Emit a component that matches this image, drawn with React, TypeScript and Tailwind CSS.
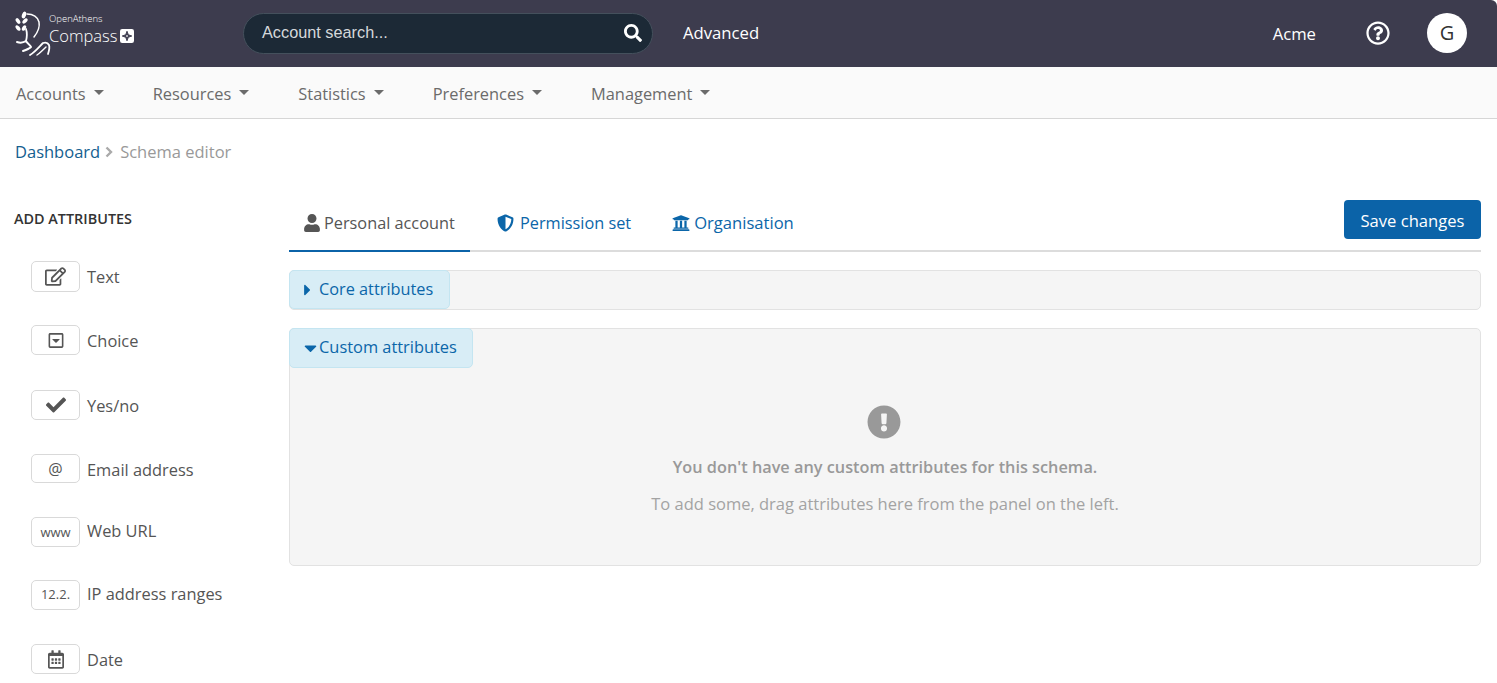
import { FaCaretDown, FaCaretRight, FaCheck, FaExclamationCircle, FaRegCalendarAlt, FaRegCaretSquareDown, FaRegEdit, FaRegQuestionCircle, FaSearch, FaShieldAlt, FaUniversity, FaUser } from "react-icons/fa";

const navItems = ["Accounts", "Resources", "Statistics", "Preferences", "Management"];

const attributes = [
  { label: "Text", box: <FaRegEdit className="w-[21px] h-[19px]" />, cls: "mt-[33px] h-[31px]", labelCls: "pt-[2px]" },
  { label: "Choice", box: <FaRegCaretSquareDown className="w-[16px] h-[17px]" />, cls: "mt-[33px] h-[30px]", labelCls: "pt-[2px]" },
  { label: "Yes/no", box: <FaCheck className="w-[20px] h-[20px]" />, cls: "mt-[35px] h-[30px]", labelCls: "pt-[2px]" },
  { label: "Email address", box: <span className="text-[16px]">@</span>, cls: "mt-[34px] h-[29px]", labelCls: "pt-[4px]" },
  { label: "Web URL", box: <span className="text-[13px] pt-[1px]">www</span>, cls: "mt-[34px] h-[30px]", labelCls: "pb-[2px]" },
  { label: "IP address ranges", box: <span className="text-[13px]">12.2.</span>, cls: "mt-[33px] h-[30px]", labelCls: "pb-[2px]" },
  { label: "Date", box: <FaRegCalendarAlt className="w-[16px] h-[19px]" />, cls: "mt-[34px] h-[30px]", labelCls: "pt-[2px]" },
];

function Logo() {
  return (
    <svg width="44" height="50" viewBox="0 0 44 50" fill="none" stroke="white" strokeLinecap="round" strokeLinejoin="round" className="shrink-0">
      <path d="M17 5c6 0 11 3 12 8 1 5-1 10-5 15" strokeWidth="1.500" />
      <path d="M16 20c1 3 1 8 0 12" strokeWidth="1.800" />
      <path d="M7 33c3 1 6 1 9-1 2 3 4 4 5 6-2 2-5 3-8 4" strokeWidth="2" />
      <path d="M20 46c5-3 9-8 13-12 3-1 5 0 6 2 1 3 0 6-1 9" strokeWidth="1.800" />
      <path d="M27 46c3-2 6-5 9-8" strokeWidth="1.400" />
      <g fill="white" stroke="none">
        <ellipse cx="14" cy="6" rx="2" ry="3.500" transform="rotate(20 14 6)" />
        <ellipse cx="8" cy="12" rx="1.800" ry="3.200" transform="rotate(-35 8 12)" />
        <ellipse cx="15" cy="12" rx="1.800" ry="3.200" transform="rotate(45 15 12)" />
        <ellipse cx="8" cy="19" rx="1.800" ry="3.200" transform="rotate(-40 8 19)" />
        <ellipse cx="14" cy="19" rx="1.800" ry="3" transform="rotate(30 14 19)" />
      </g>
    </svg>
  );
}

function PlusBadge() {
  return (
    <svg width="14" height="14" viewBox="0 0 16 16" className="shrink-0">
      <rect width="16" height="16" rx="2.500" fill="white" />
      <path d="M8 2.500 9.500 6.500 13.500 8 9.500 9.500 8 13.500 6.500 9.500 2.500 8 6.500 6.500Z" fill="#3d3c4e" stroke="#3d3c4e" strokeWidth="1" />
      <path d="M8 6.800V9.200M6.800 8H9.200" stroke="white" strokeWidth="0.800" />
    </svg>
  );
}

export default function App() {
  return (
    <div className="w-[1497px] h-[683px] overflow-hidden bg-white text-[#555] font-['Open_Sans',sans-serif] text-[16.3px]">
      <header className="h-[67px] bg-[#3d3c4e] rounded-tr-[6px] flex items-center text-white">
        <div className="ml-[10px] w-[233px] flex items-center">
          <Logo />
          <div className="-ml-[5px] -mt-[9px] flex flex-col">
            <span className="text-[9.500px] leading-[11px] font-light">OpenAthens</span>
            <div className="flex items-center gap-[3px] mt-[2px]">
              <span className="text-[16.500px] leading-[20px] font-light">Compass</span>
              <PlusBadge />
            </div>
          </div>
        </div>
        <div className="w-[410px] h-[41px] rounded-full bg-[#1c2936] border border-[#44505c] flex items-center pl-[18px] pr-[10px] justify-between -mt-[1px]">
          <span className="text-[#d5d8db] text-[16.300px] font-['Liberation_Sans',sans-serif] -mt-[2px]">Account search...</span>
          <FaSearch className="w-[18px] h-[18px] text-white" />
        </div>
        <span className="ml-[30px] text-[16.700px] -mt-[1px]">Advanced</span>
        <span className="ml-auto text-[16.700px]">Acme</span>
        <FaRegQuestionCircle className="ml-[50px] w-[24px] h-[24px] -mt-[2px]" />
        <div className="ml-[37px] mr-[30px] w-[40px] h-[40px] -mt-[2px] rounded-full bg-white text-[#333] flex items-center justify-center text-[20px]">G</div>
      </header>

      <nav className="h-[52px] bg-[#fafafa] border-b border-[#d6d6d6] flex items-center pl-[16px] gap-[49px]">
        {navItems.map((item) => (
          <div key={item} className="flex items-center gap-[8px] text-[#6b6b6b] text-[16.400px] pt-[2px]">
            <span className="pt-[2px]">{item}</span>
            <span className="w-0 h-0 border-x-[5px] border-x-transparent border-t-[5px] border-t-[#6b6b6b] -mt-[2px]" />
          </div>
        ))}
      </nav>

      <div className="h-[65px] pl-[15px] pt-[21px] flex items-start text-[16.500px] leading-[24px]">
        <span className="text-[#14608f]">Dashboard</span>
        <svg width="8" height="12" viewBox="0 0 8 12" className="ml-[5px] mr-[7px] mt-[6px]" fill="none" stroke="#aaa" strokeWidth="2.400"><path d="M1.500 1.500 6 6l-4.500 4.500" /></svg>
        <span className="text-[#999]">Schema editor</span>
      </div>

      <div className="flex">
        <aside className="w-[289px] pl-[14px] pt-[25px] shrink-0">
          <h2 className="text-[14.400px] font-semibold leading-[20px] text-[#333] -mb-px">ADD ATTRIBUTES</h2>
          {attributes.map((a) => (
            <div key={a.label} className={`flex items-center ml-[17px] ${a.cls}`}>
              <div className="w-[49px] h-full rounded-[5px] border border-[#d9d9d9] flex items-center justify-center text-[#555]">{a.box}</div>
              <span className={`ml-[7px] text-[16.400px] ${a.labelCls}`}>{a.label}</span>
            </div>
          ))}
        </aside>

        <main className="w-[1192px]">
          <div className="h-[86px] pt-[16px]">
            <div className="flex justify-between h-[52px] border-b-2 border-[#dcdcdc]">
              <div className="flex">
                <div className="w-[181px] h-[52px] border-b-2 border-[#0b63a8] flex items-start pl-[15px] pt-[11px] gap-[4px]">
                  <FaUser className="w-[16px] h-[18px] mt-[3px]" />
                  <span>Personal account</span>
                </div>
                <div className="ml-[27px] pt-[11px] flex items-start gap-[6px] text-[#0b66a9]">
                  <FaShieldAlt className="w-[17px] h-[18px] mt-[3px]" />
                  <span>Permission set</span>
                </div>
                <div className="ml-[41px] pt-[11px] flex items-start gap-[4px] text-[#0b66a9] text-[16.600px]">
                  <FaUniversity className="w-[18px] h-[18px] mt-[3px]" />
                  <span>Organisation</span>
                </div>
              </div>
              <button className="w-[137px] h-[39px] pt-[3px] rounded-[4px] bg-[#0b63a8] text-white text-[16.600px]">Save changes</button>
            </div>
          </div>

          <section className="h-[40px] rounded-[5px] bg-[#f5f5f5] border border-[#e2e2e2]">
            <div className="w-[161px] h-[39px] -mt-px -ml-px rounded-[5px] bg-[#d8edf6] border border-[#c4e5f1] flex items-center pl-[14px] gap-[8px] text-[#0b66a9]">
              <FaCaretRight className="w-[7px] h-[18px] shrink-0" />
              <span>Core attributes</span>
            </div>
          </section>

          <section className="h-[238px] mt-[18px] rounded-[5px] bg-[#f5f5f5] border border-[#e2e2e2]">
            <div className="w-[184px] h-[40px] -mt-px -ml-px rounded-[5px] bg-[#d8edf6] border border-[#c4e5f1] flex items-center pl-[14px] gap-[2px] text-[#0b66a9]">
              <FaCaretDown className="w-[13px] h-[20px] shrink-0" />
              <span className="pb-[2px] text-[16.400px]">Custom attributes</span>
            </div>
            <div className="flex flex-col items-center pt-[37px] text-[#999]">
              <FaExclamationCircle className="w-[34px] h-[34px] text-[#999] -ml-[2px]" />
              <p className="mt-[16px] font-semibold leading-[24px]">You don't have any custom attributes for this schema.</p>
              <p className="mt-[13px] leading-[24px] text-[#a3a3a3] text-[16.500px]">To add some, drag attributes here from the panel on the left.</p>
            </div>
          </section>
        </main>
      </div>
    </div>
  );
}
